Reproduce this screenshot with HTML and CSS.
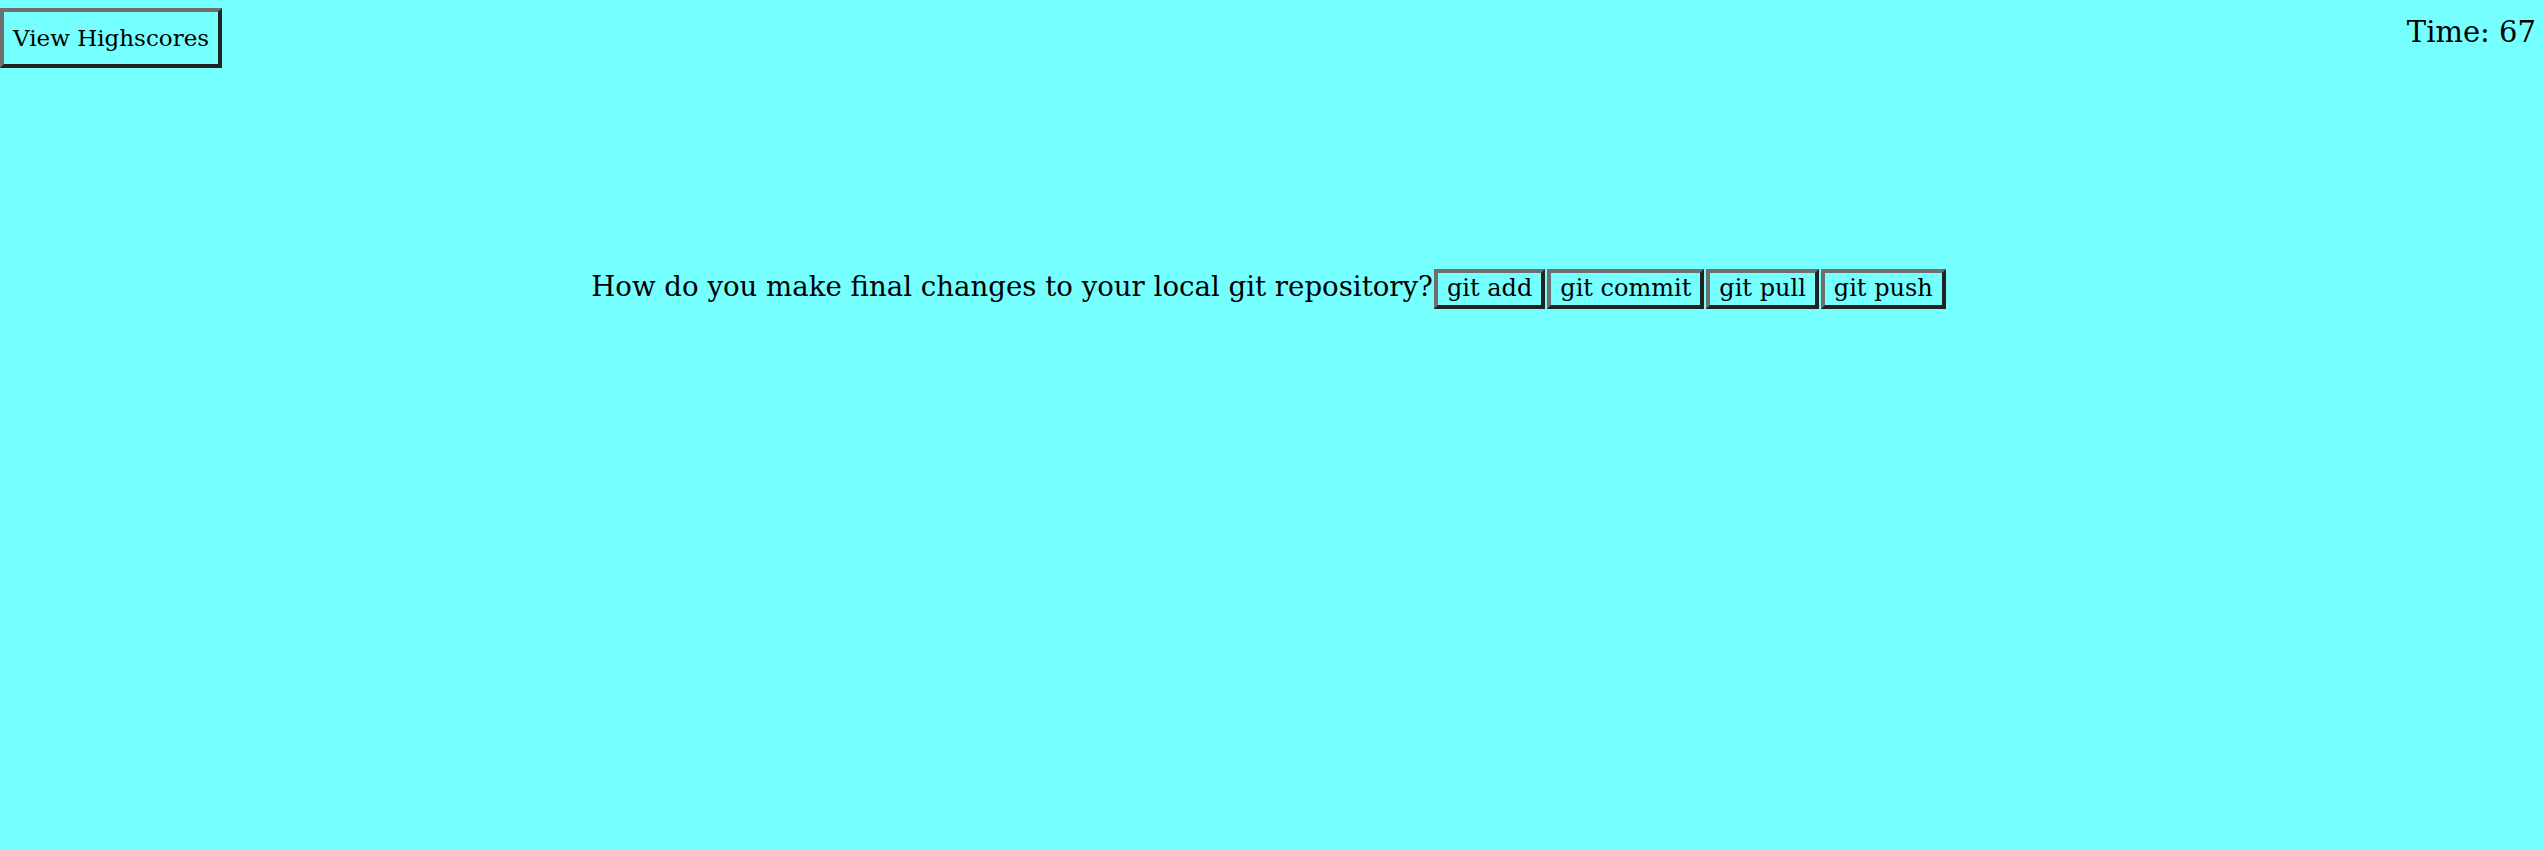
FILE: index.html
```html
<!DOCTYPE html>
<html>
<head>
<meta charset="utf-8">
<title>Quiz</title>
<link rel="stylesheet" href="styles.css">
</head>
<body>
<header class="top">
  <button class="btn btn-hs">View Highscores</button>
  <div class="timer">Time: 67</div>
</header>
<main class="quiz">
  <div class="question">How do you make final changes to your local git repository?<button class="btn btn-ans">git add</button><button class="btn btn-ans">git commit</button><button class="btn btn-ans">git pull</button><button class="btn btn-ans">git push</button></div>
</main>
</body>
</html>
```
FILE: styles.css
```css
html, body {
  margin: 0;
  padding: 0;
  background: #75ffff;
  color: #000;
  font-family: "DejaVu Serif", serif;
  height: 100%;
}

.top {
  display: flex;
  justify-content: space-between;
  align-items: flex-start;
  padding-top: 8px;
}

.btn {
  background: #75ffff;
  color: #000;
  font-family: "DejaVu Serif", serif;
  border-style: solid;
  border-width: 4px;
  border-color: #6f6f6f #222 #222 #6f6f6f;
  cursor: pointer;
}

.btn-hs {
  font-size: 23px;
  padding: 13px 9px;
  line-height: 1.15;
}

.timer {
  font-size: 29px;
  margin-right: 8px;
  line-height: 1.2;
  margin-top: 7px;
}

.quiz {
  text-align: center;
  margin-top: 201px;
}

.question {
  font-size: 27.6px;
  padding-right: 6px;
}

.btn-ans {
  font-size: 24px;
  padding: 2px 9px;
  margin: 0 1px;
  line-height: 1.15;
  vertical-align: baseline;
}
```
